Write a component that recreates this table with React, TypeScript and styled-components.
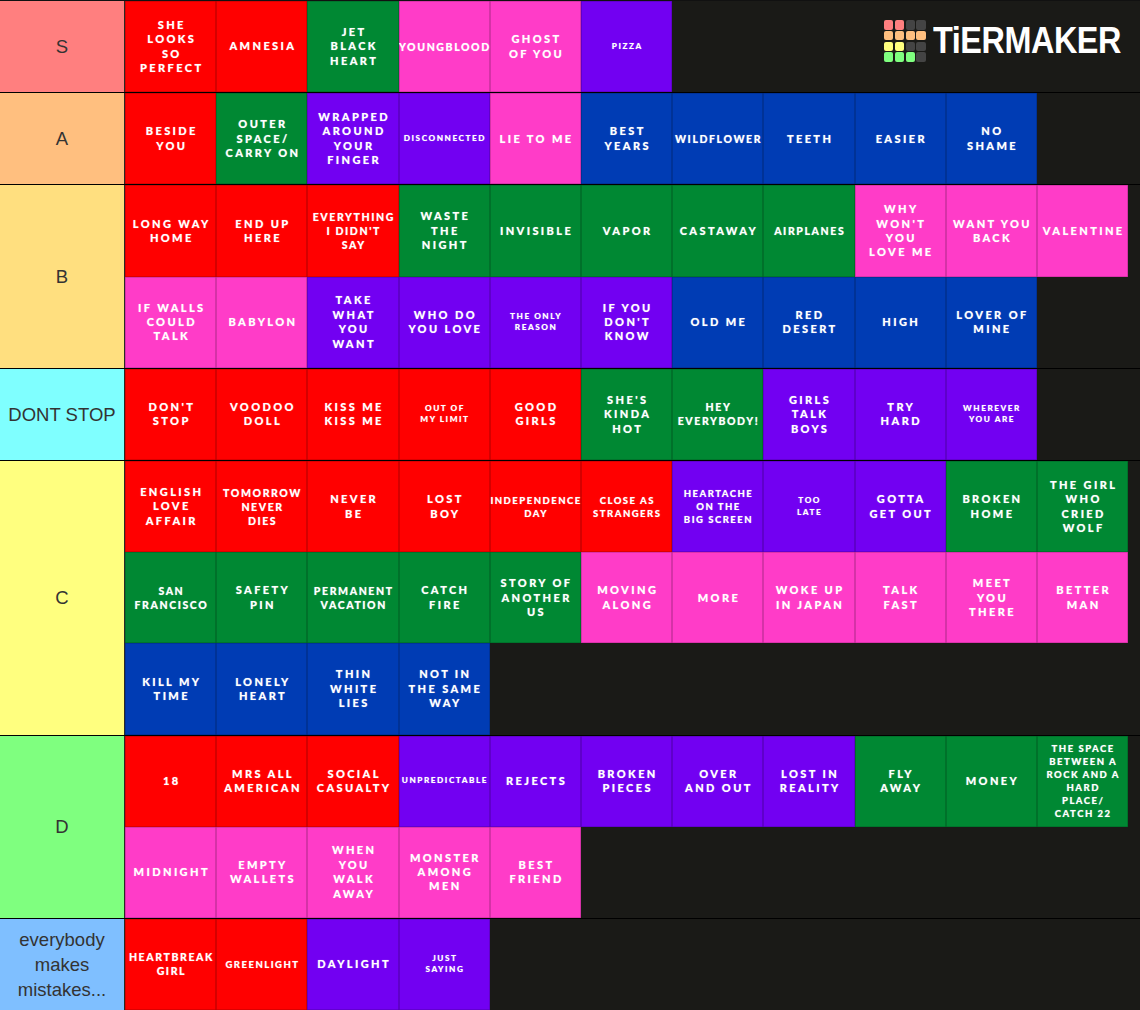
import styled, { createGlobalStyle } from 'styled-components'

const GlobalStyle = createGlobalStyle`
  html, body {
    margin: 0;
    padding: 0;
    background: #1a1a17;
  }
`

type Size = 'md' | 'wide' | 'sm' | 'xs'
type Tile = [string, string, Size?]

const RED = '#ff0000'
const GREEN = '#008833'
const PURPLE = '#7200f2'
const PINK = '#ff3cc8'
const BLUE = '#003cb4'

interface Tier {
  label: string
  color: string
  rows: Tile[][]
}

const tiers: Tier[] = [
  {
    label: 'S',
    color: '#ff7f7f',
    rows: [[
      [RED, 'SHE\nLOOKS\nSO\nPERFECT'],
      [RED, 'AMNESIA'],
      [GREEN, 'JET\nBLACK\nHEART'],
      [PINK, 'YOUNGBLOOD', 'wide'],
      [PINK, 'GHOST\nOF YOU'],
      [PURPLE, 'PIZZA', 'xs'],
    ]],
  },
  {
    label: 'A',
    color: '#ffbf7f',
    rows: [[
      [RED, 'BESIDE\nYOU'],
      [GREEN, 'OUTER\nSPACE/\nCARRY ON'],
      [PURPLE, 'WRAPPED\nAROUND\nYOUR\nFINGER'],
      [PURPLE, 'DISCONNECTED', 'xs'],
      [PINK, 'LIE TO ME'],
      [BLUE, 'BEST\nYEARS'],
      [BLUE, 'WILDFLOWER', 'wide'],
      [BLUE, 'TEETH'],
      [BLUE, 'EASIER'],
      [BLUE, 'NO\nSHAME'],
    ]],
  },
  {
    label: 'B',
    color: '#ffdf7f',
    rows: [
      [
        [RED, 'LONG WAY\nHOME'],
        [RED, 'END UP\nHERE'],
        [RED, "EVERYTHING\nI DIDN'T\nSAY", 'wide'],
        [GREEN, 'WASTE\nTHE\nNIGHT'],
        [GREEN, 'INVISIBLE'],
        [GREEN, 'VAPOR'],
        [GREEN, 'CASTAWAY'],
        [GREEN, 'AIRPLANES', 'wide'],
        [PINK, "WHY\nWON'T\nYOU\nLOVE ME"],
        [PINK, 'WANT YOU\nBACK'],
        [PINK, 'VALENTINE'],
      ],
      [
        [PINK, 'IF WALLS\nCOULD\nTALK'],
        [PINK, 'BABYLON'],
        [PURPLE, 'TAKE\nWHAT\nYOU\nWANT'],
        [PURPLE, 'WHO DO\nYOU LOVE'],
        [PURPLE, 'THE ONLY\nREASON', 'xs'],
        [PURPLE, "IF YOU\nDON'T\nKNOW"],
        [BLUE, 'OLD ME'],
        [BLUE, 'RED\nDESERT'],
        [BLUE, 'HIGH'],
        [BLUE, 'LOVER OF\nMINE'],
      ],
    ],
  },
  {
    label: 'DONT STOP',
    color: '#7fffff',
    rows: [[
      [RED, "DON'T\nSTOP"],
      [RED, 'VOODOO\nDOLL'],
      [RED, 'KISS ME\nKISS ME'],
      [RED, 'OUT OF\nMY LIMIT', 'xs'],
      [RED, 'GOOD\nGIRLS'],
      [GREEN, "SHE'S\nKINDA\nHOT"],
      [GREEN, 'HEY\nEVERYBODY!', 'wide'],
      [PURPLE, 'GIRLS\nTALK\nBOYS'],
      [PURPLE, 'TRY\nHARD'],
      [PURPLE, 'WHEREVER\nYOU ARE', 'xs'],
    ]],
  },
  {
    label: 'C',
    color: '#ffff7f',
    rows: [
      [
        [RED, 'ENGLISH\nLOVE\nAFFAIR'],
        [RED, 'TOMORROW\nNEVER\nDIES', 'wide'],
        [RED, 'NEVER\nBE'],
        [RED, 'LOST\nBOY'],
        [RED, 'INDEPENDENCE\nDAY', 'sm'],
        [RED, 'CLOSE AS\nSTRANGERS', 'sm'],
        [PURPLE, 'HEARTACHE\nON THE\nBIG SCREEN', 'sm'],
        [PURPLE, 'TOO\nLATE', 'xs'],
        [PURPLE, 'GOTTA\nGET OUT'],
        [GREEN, 'BROKEN\nHOME'],
        [GREEN, 'THE GIRL\nWHO\nCRIED\nWOLF'],
      ],
      [
        [GREEN, 'SAN\nFRANCISCO', 'wide'],
        [GREEN, 'SAFETY\nPIN'],
        [GREEN, 'PERMANENT\nVACATION', 'wide'],
        [GREEN, 'CATCH\nFIRE'],
        [GREEN, 'STORY OF\nANOTHER\nUS'],
        [PINK, 'MOVING\nALONG'],
        [PINK, 'MORE'],
        [PINK, 'WOKE UP\nIN JAPAN'],
        [PINK, 'TALK\nFAST'],
        [PINK, 'MEET\nYOU\nTHERE'],
        [PINK, 'BETTER\nMAN'],
      ],
      [
        [BLUE, 'KILL MY\nTIME'],
        [BLUE, 'LONELY\nHEART'],
        [BLUE, 'THIN\nWHITE\nLIES'],
        [BLUE, 'NOT IN\nTHE SAME\nWAY'],
      ],
    ],
  },
  {
    label: 'D',
    color: '#7fff7f',
    rows: [
      [
        [RED, '18'],
        [RED, 'MRS ALL\nAMERICAN'],
        [RED, 'SOCIAL\nCASUALTY'],
        [PURPLE, 'UNPREDICTABLE', 'xs'],
        [PURPLE, 'REJECTS'],
        [PURPLE, 'BROKEN\nPIECES'],
        [PURPLE, 'OVER\nAND OUT'],
        [PURPLE, 'LOST IN\nREALITY'],
        [GREEN, 'FLY\nAWAY'],
        [GREEN, 'MONEY'],
        [GREEN, 'THE SPACE\nBETWEEN A\nROCK AND A\nHARD\nPLACE/\nCATCH 22', 'sm'],
      ],
      [
        [PINK, 'MIDNIGHT'],
        [PINK, 'EMPTY\nWALLETS'],
        [PINK, 'WHEN\nYOU\nWALK\nAWAY'],
        [PINK, 'MONSTER\nAMONG\nMEN'],
        [PINK, 'BEST\nFRIEND'],
      ],
    ],
  },
  {
    label: 'everybody makes mistakes...',
    color: '#7fbfff',
    rows: [[
      [RED, 'HEARTBREAK\nGIRL', 'wide'],
      [RED, 'GREENLIGHT', 'sm'],
      [PURPLE, 'DAYLIGHT'],
      [PURPLE, 'JUST\nSAYING', 'xs'],
    ]],
  },
]

const sizes: Record<Size, { font: number; spacing: number; line: number }> = {
  md: { font: 11, spacing: 2.4, line: 14.4 },
  wide: { font: 10.5, spacing: 1.6, line: 14 },
  sm: { font: 9.5, spacing: 1.5, line: 13 },
  xs: { font: 8.2, spacing: 1.55, line: 11.4 },
}

const Board = styled.div`
  position: relative;
  width: 1140px;
  background: #1a1a17;
  font-family: 'Liberation Sans', Arial, sans-serif;
`

const TierRow = styled.div`
  display: flex;
  border-top: 1px solid #000;
  &:first-child {
    border-top-color: #111;
  }
`

const Label = styled.div<{ $bg: string }>`
  flex: 0 0 125px;
  box-sizing: border-box;
  display: flex;
  align-items: center;
  justify-content: center;
  padding: 0 6px;
  background: ${p => p.$bg};
  border-right: 1px solid #2b2b26;
  color: #333;
  font-size: 18.5px;
  line-height: 25px;
  text-align: center;
`

const Tiles = styled.div`
  flex: 1;
  display: flex;
  flex-direction: column;
`

const TileLine = styled.div`
  display: flex;
  height: 91.2px;
`

const TileBox = styled.div<{ $bg: string; $size: Size }>`
  flex: 0 0 91.2px;
  height: 91.2px;
  box-sizing: border-box;
  display: flex;
  align-items: center;
  justify-content: center;
  background: ${p => p.$bg};
  box-shadow: inset 0 0 0 0.6px rgba(0, 0, 0, 0.28);
  color: #fff;
  font-family: Lato, 'Open Sans', sans-serif;
  font-weight: 900;
  font-size: ${p => sizes[p.$size].font}px;
  letter-spacing: ${p => sizes[p.$size].spacing}px;
  line-height: ${p => sizes[p.$size].line}px;
  text-align: center;
  white-space: pre;
  overflow: hidden;
  text-shadow: 0 0 1px rgba(255, 255, 255, 0.5);
  & > span {
    margin-right: -${p => sizes[p.$size].spacing}px;
  }
`

const Logo = styled.div`
  position: absolute;
  top: 20px;
  left: 884px;
  display: flex;
  align-items: center;
  gap: 7px;
`

const LogoGrid = styled.div`
  display: grid;
  grid-template-columns: repeat(4, 9.4px);
  grid-auto-rows: 9.4px;
  gap: 1.4px;
`

const Cell = styled.div<{ $c: string }>`
  background: ${p => p.$c};
  border-radius: 2px;
`

const LogoText = styled.div`
  font-family: 'Liberation Sans', Arial, sans-serif;
  font-weight: 700;
  font-size: 37px;
  line-height: 42px;
  color: #fff;
  letter-spacing: -0.5px;
  transform: scaleX(0.875);
  transform-origin: left center;
`

const logoCells = [
  '#ff7f7f', '#ff7f7f', '#444', '#444',
  '#ffbf7f', '#ffbf7f', '#ffbf7f', '#ffbf7f',
  '#ffff7f', '#ffff7f', '#444', '#444',
  '#7fff7f', '#7fff7f', '#7fff7f', '#444',
]

export default function App() {
  return (
    <>
      <GlobalStyle />
      <Board>
        {tiers.map(tier => (
          <TierRow key={tier.label}>
            <Label $bg={tier.color}>{tier.label}</Label>
            <Tiles>
              {tier.rows.map((row, i) => (
                <TileLine key={i}>
                  {row.map(([bg, text, size], j) => (
                    <TileBox key={j} $bg={bg} $size={size ?? 'md'}>
                      <span>{text}</span>
                    </TileBox>
                  ))}
                </TileLine>
              ))}
            </Tiles>
          </TierRow>
        ))}
        <Logo>
          <LogoGrid>
            {logoCells.map((c, i) => (
              <Cell key={i} $c={c} />
            ))}
          </LogoGrid>
          <LogoText>TiERMAKER</LogoText>
        </Logo>
      </Board>
    </>
  )
}
